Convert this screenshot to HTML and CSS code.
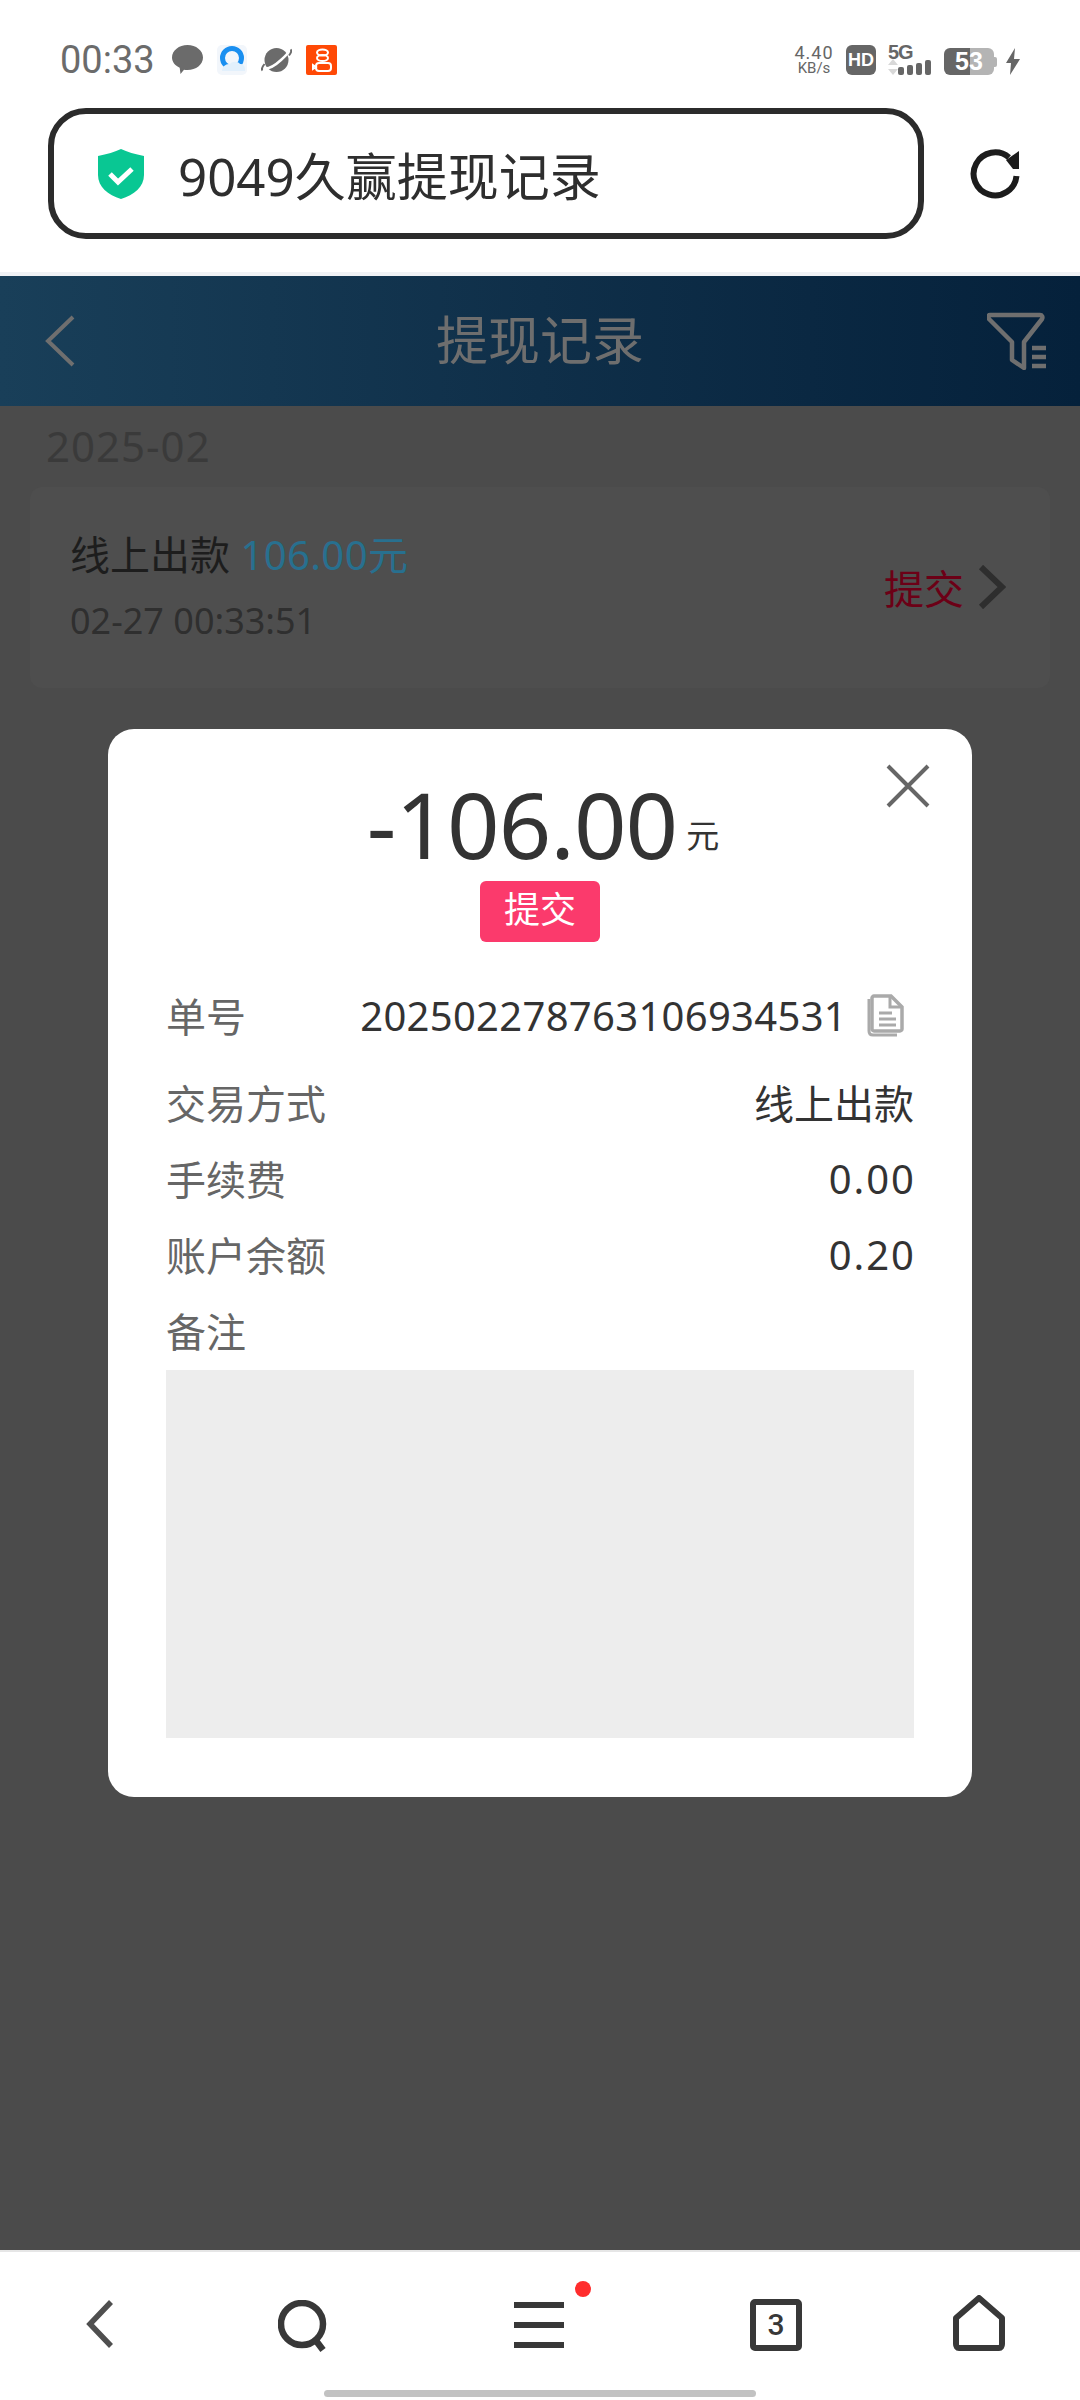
FILE: index.html
```html
<!DOCTYPE html>
<html lang="zh-CN">
<head>
    <meta charset="UTF-8">
    <meta name="viewport" content="width=device-width, initial-scale=1.0">
    <title>提现记录</title>
    <link rel="stylesheet" href="styles.css">
</head>
<body>
    <!-- Phone status bar -->
    <div class="status-bar">
        <div class="status-left">
            <span class="clock">00:33</span>
            <svg class="st-icon" width="31" height="30" viewBox="0 0 31 30"><path d="M15.500 0C24 0 31 5.500 31 12.500S24 25 15.500 25c-1.500 0-2.500-.1-3.500-.3L8.500 29l-.8-6.300C3 20.500 0 16.800 0 12.500 0 5.500 7 0 15.500 0z" fill="#6b6b6b"/></svg>
            <svg class="st-icon" width="30" height="30" viewBox="0 0 30 30"><rect width="30" height="30" rx="5" fill="#f2f6fb"/><circle cx="15" cy="13" r="9.500" fill="none" stroke="#1a8ff0" stroke-width="5"/><path d="M5 25c1-5 5-6 8-6 2-3 8-3 10 0 3 0 5 2 5 5v2H5z" fill="#e2f0fc"/></svg>
            <svg class="st-icon" width="31" height="30" viewBox="0 0 31 30"><circle cx="15.500" cy="15" r="12" fill="#6b6b6b"/><path d="M3 23.500C7 24 14 20.500 20 15S28.500 7 27.500 5.500" fill="none" stroke="#fff" stroke-width="2.500"/><path d="M1.500 25.500c-1.500-1.500 0-4 2-6.500M29.500 4.500c1.500 1 .5 3.500-1.500 6" fill="none" stroke="#6b6b6b" stroke-width="2"/></svg>
            <svg class="st-icon" width="31" height="30" viewBox="0 0 31 30"><rect width="31" height="30" rx="2" fill="#ff4906"/><g fill="none" stroke="#fff" stroke-width="2"><ellipse cx="16.500" cy="7.500" rx="5.500" ry="3"/><ellipse cx="16.500" cy="13" rx="5.500" ry="3"/><rect x="10" y="18" width="15" height="8" rx="3"/><path d="M10 22l-3-2v4z"/></g></svg>
        </div>
        <div class="status-right">
            <div class="net-speed">
                <span class="speed-num">4.40</span>
                <span class="speed-unit">KB/s</span>
            </div>
            <span class="hd-badge">HD</span>
            <div class="signal">
                <span class="signal-label">5G</span>
                <svg width="44" height="16" viewBox="0 0 44 16"><path d="M5 0l5 6H0zM5 16l5-6H0z" fill="#d8d8d8"/><rect x="10" y="8" width="6" height="8" rx="2" fill="#666"/><rect x="19" y="6" width="6" height="10" rx="2" fill="#666"/><rect x="28" y="4" width="6" height="12" rx="2" fill="#666"/><rect x="37" y="1" width="6" height="15" rx="2" fill="#666"/></svg>
            </div>
            <span class="battery">53</span>
            <svg class="bolt" width="14" height="27" viewBox="0 0 14 27"><path d="M9 0L0 15h5l-1 12 10-16H8z" fill="#666"/></svg>
        </div>
    </div>

    <!-- Browser address bar -->
    <div class="address-row">
        <div class="address-box">
            <svg width="46" height="50" viewBox="0 0 46 50"><path d="M23 0c6 3 14 5 23 7v19c0 12-10 20-23 24C10 46 0 38 0 26V7c9-2 17-4 23-7z" fill="#09c793"/><path d="M12 25l8 8 14-13" fill="none" stroke="#fff" stroke-width="5"/></svg>
            <span class="address-text">9049久赢提现记录</span>
        </div>
        <svg class="refresh" width="50" height="50" viewBox="0 0 50 50"><path d="M46.500 27A21.500 21.500 0 1 1 39 8.500" fill="none" stroke="#1c1c1c" stroke-width="6"/><path d="M49 2v18H43L36 11z" fill="#1c1c1c"/></svg>
    </div>

    <!-- Page header, dimmed by the dialog -->
    <header class="page-header">
        <svg class="back-icon" width="30" height="52" viewBox="0 0 30 52"><path d="M28 2L3 26l25 24" fill="none" stroke="#6f6f6f" stroke-width="4"/></svg>
        <h1>提现记录</h1>
        <svg class="filter-icon" width="60" height="58" viewBox="0 0 60 58"><path d="M3 3h50c2 0 3 2 2 4L37 30v26l-12-8V30L2 7C1 5 1 3 3 3z" fill="none" stroke="#6f6f6f" stroke-width="4.500" stroke-linejoin="round"/><path d="M45 36h14M45 45h14M45 54h14" stroke="#6f6f6f" stroke-width="4.500"/></svg>
    </header>

    <main class="page-body">
        <div class="month">2025-02</div>
        <div class="record-card">
            <div>
                <p class="record-title">线上出款 <span class="record-amount">106.00元</span></p>
                <p class="record-time">02-27 00:33:51</p>
            </div>
            <div class="record-status">
                <span>提交</span>
                <svg width="28" height="44" viewBox="0 0 28 44"><path d="M3 2l21 20L3 42" fill="none" stroke="#2e2e2e" stroke-width="6"/></svg>
            </div>
        </div>

        <!-- Dialog -->
        <div class="mask">
            <div class="dialog">
                <svg class="close-btn" width="44" height="44" viewBox="0 0 44 44"><path d="M2 2l40 40M42 2L2 42" stroke="#666" stroke-width="4"/></svg>
                <div class="amount"><span class="amount-num">-106.00</span><span class="amount-unit">元</span></div>
                <div class="badge-wrap"><span class="badge">提交</span></div>

                <div class="row row-first">
                    <span class="row-label">单号</span>
                    <span class="row-value order-no">202502278763106934531
                        <svg width="40" height="44" viewBox="0 0 40 44"><path d="M4 6v32c0 2 1 4 4 4h24" fill="none" stroke="#aaa" stroke-width="3"/><path d="M9 3h17l11 11v22c0 1-1 2-2 2H9c-1 0-2-1-2-2V5c0-1 1-2 2-2z" fill="none" stroke="#aaa" stroke-width="3.500"/><path d="M25 3v11h12" fill="none" stroke="#aaa" stroke-width="3"/><path d="M14 20h13M14 26h17M14 32h17" stroke="#aaa" stroke-width="3"/></svg>
                    </span>
                </div>
                <div class="row">
                    <span class="row-label">交易方式</span>
                    <span class="row-value">线上出款</span>
                </div>
                <div class="row">
                    <span class="row-label">手续费</span>
                    <span class="row-value row-num">0.00</span>
                </div>
                <div class="row">
                    <span class="row-label">账户余额</span>
                    <span class="row-value row-num">0.20</span>
                </div>
                <div class="row">
                    <span class="row-label">备注</span>
                </div>
                <div class="note-box"></div>
            </div>
        </div>
    </main>

    <!-- Browser toolbar -->
    <nav class="toolbar">
        <svg class="tool-back" width="28" height="48" viewBox="0 0 28 48"><path d="M25 2L4 24l21 22" fill="none" stroke="#4f4f4f" stroke-width="5.500"/></svg>
        <svg class="tool-search" width="52" height="52" viewBox="0 0 52 52"><circle cx="24" cy="24" r="21" fill="none" stroke="#383838" stroke-width="6.500"/><path d="M36 38l9 12" stroke="#383838" stroke-width="6.500"/></svg>
        <div class="menu-icon">
            <span></span><span></span><span></span>
            <i class="red-dot"></i>
        </div>
        <span class="tab-count">3</span>
        <svg class="tool-home" width="52" height="56" viewBox="0 0 52 56"><path d="M26 3l23 20v26c0 2-1 4-3 4H6c-2 0-3-2-3-4V23z" fill="none" stroke="#383838" stroke-width="6" stroke-linejoin="round"/></svg>
        <div class="home-bar"></div>
    </nav>
</body>
</html>
```

FILE: styles.css
```css
* {
    box-sizing: border-box;
}

body {
    font-family: "Noto Sans", "Noto Sans CJK SC", sans-serif;
    background-color: #ffffff;
    margin: 0;
    width: 1080px;
    height: 2400px;
    display: flex;
    flex-direction: column;
}

/* status bar */
.status-bar {
    height: 108px;
    padding: 45px 60px 0 60px;
    display: flex;
    justify-content: space-between;
    align-items: flex-start;
}

.status-left {
    display: flex;
    align-items: flex-start;
    gap: 14px;
}

.clock {
    font-family: Roboto, sans-serif;
    font-size: 38px;
    line-height: 30px;
    color: #6b6b6b;
    margin-right: 3px;
}

.st-icon {
    display: block;
}

.status-right {
    display: flex;
    align-items: flex-start;
    gap: 12px;
}

.net-speed {
    display: flex;
    flex-direction: column;
    align-items: center;
    font-family: Roboto, sans-serif;
    color: #666666;
    width: 40px;
}

.speed-num {
    font-size: 18px;
    line-height: 16px;
    letter-spacing: 1px;
}

.speed-unit {
    font-size: 15px;
    line-height: 15px;
}

.hd-badge {
    width: 30px;
    height: 30px;
    border-radius: 6px;
    background-color: #666666;
    color: #ffffff;
    font-family: "Liberation Sans", sans-serif;
    font-size: 18px;
    font-weight: bold;
    line-height: 30px;
    text-align: center;
}

.signal {
    width: 44px;
    height: 30px;
    display: flex;
    flex-direction: column;
}

.signal-label {
    font-family: "Liberation Sans", sans-serif;
    font-size: 20px;
    font-weight: bold;
    line-height: 14px;
    color: #666666;
    letter-spacing: -1px;
}

.battery {
    position: relative;
    width: 50px;
    height: 27px;
    margin-top: 3px;
    margin-left: 0;
    border-radius: 6px;
    background: linear-gradient(90deg, #666666 52%, #b4b4b4 52%);
    color: #ffffff;
    font-family: "Liberation Sans", sans-serif;
    font-size: 25px;
    font-weight: bold;
    line-height: 27px;
    text-align: center;
}

.battery::after {
    content: "";
    position: absolute;
    right: -3px;
    top: 9px;
    width: 3px;
    height: 10px;
    border-radius: 0 2px 2px 0;
    background-color: #b4b4b4;
}

.bolt {
    margin-top: 3px;
}

/* address bar */
.address-row {
    height: 168px;
    padding: 0 60px 33px 48px;
    display: flex;
    justify-content: space-between;
    align-items: center;
    border-bottom: 4px solid #f0f2f5;
}

.address-box {
    width: 876px;
    height: 131px;
    border: 6px solid #2b2b2b;
    border-radius: 38px;
    padding-left: 44px;
    display: flex;
    align-items: center;
    gap: 34px;
}

.address-text {
    font-size: 51px;
    color: #2e2e2e;
}

/* page header */
.page-header {
    height: 130px;
    padding: 0 33px;
    background: linear-gradient(90deg, #193f59 0%, #0f2f49 50%, #05213b 100%);
    display: grid;
    grid-template-columns: 1fr auto 1fr;
    align-items: center;
}

.page-header h1 {
    margin: 0 0 8px 0;
    font-size: 52px;
    font-weight: 400;
    color: #6e6e6e;
}

.back-icon {
    margin-left: 12px;
}

.filter-icon {
    justify-self: end;
}

/* records */
.page-body {
    position: relative;
    flex: 1;
    background-color: #4b4b4b;
    padding: 0 30px;
}

.month {
    height: 81px;
    padding-left: 16px;
    font-size: 42px;
    line-height: 80px;
    letter-spacing: 1px;
    color: #3a3a3a;
}

.record-card {
    height: 201px;
    border-radius: 12px;
    background-color: #4e4e4e;
    padding: 0 44px 0 40px;
    display: flex;
    justify-content: space-between;
    align-items: center;
}

.record-card p {
    margin: 0;
}

.record-title {
    font-size: 40px;
    line-height: 60px;
    margin-bottom: 6px !important;
    color: #1d1d1d;
}

.record-amount {
    color: #28708f;
    letter-spacing: .4px;
}

.record-time {
    font-size: 36px;
    line-height: 60px;
    color: #2f2f2f;
}

.record-status {
    display: flex;
    align-items: center;
    gap: 14px;
    font-size: 40px;
    color: #6c0016;
    margin-bottom: 2px;
}

/* dialog, centred over the header and the records */
.mask {
    position: absolute;
    inset: -130px 0 0 0;
    display: flex;
    justify-content: center;
    align-items: center;
}

.dialog {
    position: relative;
    width: 864px;
    height: 1068px;
    padding: 45px 58px 0 58px;
    border-radius: 26px;
    background-color: #ffffff;
}

.close-btn {
    position: absolute;
    top: 35px;
    right: 42px;
}

.amount {
    height: 100px;
    padding-left: 6px;
    display: flex;
    justify-content: center;
    align-items: baseline;
    color: #333333;
}

.amount-num {
    font-size: 92px;
    line-height: 100px;
    letter-spacing: -1px;
}

.amount-unit {
    font-size: 33px;
    margin-left: 9px;
    transform: translateY(-11px);
}

.badge-wrap {
    margin-top: 7px;
    text-align: center;
    height: 61px;
}

.badge {
    display: inline-block;
    width: 120px;
    height: 61px;
    border-radius: 6px;
    background-color: #fb3a6c;
    color: #ffffff;
    font-size: 36px;
    line-height: 58px;
}

.row {
    height: 76px;
    display: flex;
    justify-content: space-between;
    align-items: center;
    font-size: 40px;
}

.row-first {
    margin-top: 35px;
    margin-bottom: 11px;
}

.row-label {
    color: #666666;
}

.row-value {
    color: #333333;
}

.row-num {
    letter-spacing: 2px;
    margin-right: -2px;
}

.order-no {
    display: flex;
    align-items: center;
    gap: 18px;
    letter-spacing: .3px;
    padding-right: 9px;
}

.note-box {
    height: 368px;
    margin-top: 2px;
    background-color: #ededed;
}

/* toolbar */
.toolbar {
    position: relative;
    height: 150px;
    padding: 45px 0 0 86px;
    background-color: #ffffff;
    border-top: 2px solid #e6e6e6;
    display: flex;
    align-items: flex-start;
}

.tool-back {
    margin-top: 3px;
}

.tool-search {
    margin: 3px 0 0 164px;
}

.menu-icon {
    position: relative;
    width: 50px;
    margin: 5px 0 0 184px;
    display: flex;
    flex-direction: column;
    gap: 14px;
}

.menu-icon span {
    display: block;
    height: 6px;
    background-color: #383838;
}

.red-dot {
    position: absolute;
    top: -21px;
    right: -27px;
    width: 16px;
    height: 16px;
    border-radius: 50%;
    background-color: #ff2d2d;
}

.tab-count {
    width: 52px;
    height: 52px;
    margin: 2px 0 0 186px;
    border: 6px solid #383838;
    border-radius: 5px;
    color: #383838;
    font-family: Roboto, sans-serif;
    font-size: 30px;
    font-weight: 500;
    line-height: 40px;
    text-align: center;
}

.tool-home {
    margin: -2px 0 0 151px;
}

.home-bar {
    position: absolute;
    left: 324px;
    bottom: 3px;
    width: 432px;
    height: 7px;
    border-radius: 4px;
    background-color: #c2c2c2;
}
```
